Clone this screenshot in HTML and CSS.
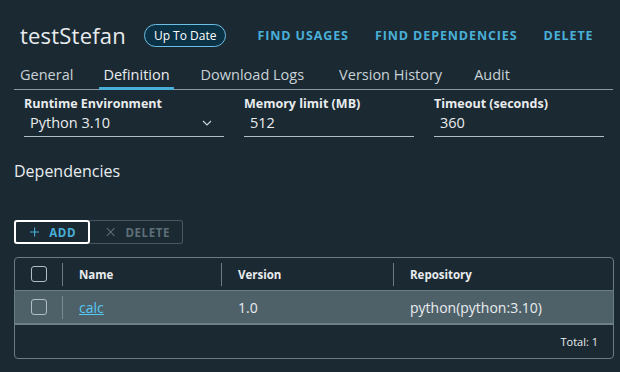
FILE: index.html
```html
<!DOCTYPE html>
<html>
<head>
<meta charset="utf-8">
<link rel="stylesheet" href="styles.css">
</head>
<body>
<div class="page">
  <header class="head">
    <h1 class="title">testStefan</h1>
    <span class="badge">Up To Date</span>
    <nav class="actions">
      <a class="action">FIND USAGES</a>
      <a class="action">FIND DEPENDENCIES</a>
      <a class="action">DELETE</a>
    </nav>
  </header>
  <div class="tabs">
    <span class="tab t1">General</span>
    <span class="tab t2 active">Definition</span>
    <span class="tab t3">Download Logs</span>
    <span class="tab t4">Version History</span>
    <span class="tab t5">Audit</span>
  </div>
  <div class="form">
    <div class="field">
      <label class="label">Runtime Environment</label>
      <div class="control">
        <span>Python 3.10</span>
        <svg class="chev" width="10" height="6" viewBox="0 0 10 6"><path d="M1 1l4 4 4-4" fill="none" stroke="#c9d2d8" stroke-width="1.2"/></svg>
      </div>
    </div>
    <div class="field">
      <label class="label">Memory limit (MB)</label>
      <div class="control"><span>512</span></div>
    </div>
    <div class="field">
      <label class="label">Timeout (seconds)</label>
      <div class="control"><span>360</span></div>
    </div>
  </div>
  <h2 class="section">Dependencies</h2>
  <div class="btns">
    <button class="btn add"><svg width="12" height="12" viewBox="0 0 12 12"><path d="M6 0v12M0 6h12" stroke="#49afd9" stroke-width="1.4"/></svg>ADD</button>
    <button class="btn del"><svg width="10" height="10" viewBox="0 0 10 10"><path d="M1 1l8 8M9 1l-8 8" stroke="#5d6f78" stroke-width="1.1"/></svg>DELETE</button>
  </div>
  <div class="grid">
    <div class="row hdr">
      <div class="cell chk"><span class="box"></span></div>
      <div class="cell c1">Name</div>
      <div class="cell c2">Version</div>
      <div class="cell c3">Repository</div>
    </div>
    <div class="row data">
      <div class="cell chk"><span class="box"></span></div>
      <div class="cell c1"><a class="link">calc</a></div>
      <div class="cell c2">1.0</div>
      <div class="cell c3">python(python:3.10)</div>
    </div>
    <div class="foot">Total: 1</div>
  </div>
</div>
</body>
</html>
```
FILE: styles.css
```css
* { box-sizing: border-box; }
html, body { margin: 0; padding: 0; background: #1b2a32; }
body { font-family: "Open Sans", "Liberation Sans", sans-serif; color: #e9ecef; width: 620px; height: 372px; overflow: hidden; }
.page { padding: 0 7px 0 14px; }
.head { display: flex; align-items: center; height: 70px; padding-left: 6px; }
.title { font-size: 22px; font-weight: 400; margin: 0; color: #e9ecef; letter-spacing: 0.2px; }
.badge { margin-left: 18px; border: 1px solid #6cc0e4; background: #0b3144; color: #fff; border-radius: 12px; font-size: 12px; padding: 3px 9px; line-height: 15px; }
.actions { display: flex; gap: 26px; margin-left: 31px; }
.action { color: #49afd9; font-weight: 700; font-size: 12.5px; letter-spacing: 0.9px; }
.tabs { display: flex; border-bottom: 1px solid #8c9aa3; height: 20px; }
.tab { font-size: 14.5px; color: #c9d2d8; padding: 0 4px; height: 20px; line-height: 10px; }
.t1 { padding-left: 6px; margin-right: 22px; }
.t2 { margin-right: 23px; }
.t3 { margin-right: 27px; }
.t4 { margin-right: 24px; }
.tab.active { color: #e9ecef; border-bottom: 3px solid #49afd9; }
.form { display: flex; gap: 20px; padding-left: 10px; margin-top: 6px; }
.field { width: 170px; }
.field:first-child { width: 200px; }
.label { display: block; font-size: 12.5px; font-weight: 700; color: #e9ecef; line-height: 16px; }
.control { display: flex; justify-content: space-between; align-items: center; border-bottom: 1px solid #b3bec4; height: 25px; padding: 0 8px 3px 6px; font-size: 14.5px; color: #e9ecef; }
.chev { margin-right: 4px; }
.section { font-size: 16px; font-weight: 400; margin: 24px 0 0 0; color: #e9ecef; line-height: 20px; }
.btns { display: flex; margin-top: 39px; }
.btn { display: flex; align-items: center; gap: 9px; height: 24px; background: transparent; font-family: inherit; font-size: 11.5px; font-weight: 700; letter-spacing: 0.6px; border-radius: 3px; padding: 0 12px; }
.btn.add { width: 76px; padding-left: 14px; gap: 10px; border: 2px solid #fff; color: #49afd9; }
.btn.del { width: 93px; border: 1px solid #485764; color: #5d6f78; padding-left: 16px; gap: 10px; border-left: none; border-radius: 0 3px 3px 0; }
.grid { margin-top: 13px; width: 600px; border: 1px solid #6a7c85; border-radius: 4px; overflow: hidden; }
.row { display: flex; height: 33px; align-items: center; }
.hdr { border-bottom: 1px solid #6a7c85; }
.data { background: #4e6169; height: 34px; border-bottom: 2px solid #6d7f88; }
.cell { height: 100%; display: flex; align-items: center; font-size: 14px; }
.hdr .cell { font-size: 11.5px; font-weight: 700; color: #e9ecef; }
.chk { width: 48px; justify-content: center; border-right: 1px solid #6a7c85; height: 23px; }
.data .chk { border-right-color: #7a8b93; }
.c1 { width: 159px; padding-left: 16px; border-right: 1px solid #6a7c85; height: 23px; }
.data .c1 { border-right: none; }
.c2 { width: 172px; padding-left: 16px; border-right: 1px solid #6a7c85; height: 23px; }
.data .c2 { border-right: none; }
.c3 { padding-left: 16px; }
.box { width: 16px; height: 16px; border: 1px solid #b3bec4; border-radius: 3px; }
.link { color: #57c8f2; text-decoration: underline; }
.foot { height: 33px; display: flex; align-items: center; justify-content: flex-end; padding-right: 15px; font-size: 11px; color: #e9ecef; }
```
